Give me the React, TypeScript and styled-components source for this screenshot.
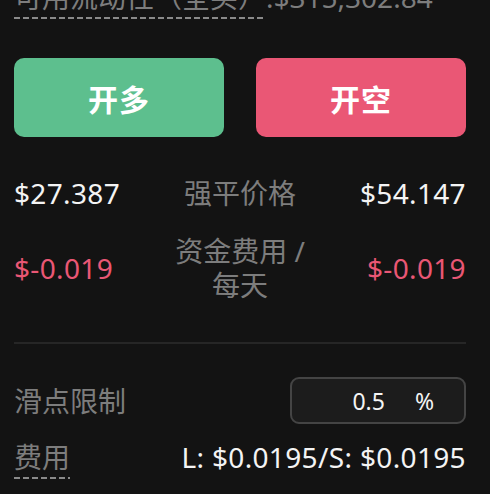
import React from 'react'
import styled, { createGlobalStyle } from 'styled-components'

const GlobalStyle = createGlobalStyle`
    html, body {
        margin: 0;
        padding: 0;
        background: #131313;
        overflow: hidden;
    }
    body {
        font-family: "Noto Sans", "Noto Sans CJK SC", sans-serif;
        color: #f2f2f2;
    }
`

const Panel = styled.div`
    display: flex;
    flex-direction: column;
    padding: 0 24px 0 14px;
    margin-top: -20px;
    height: 514px;
`

const Liquidity = styled.div`
    font-size: 28px;
    line-height: 34px;
    color: #7d7d7d;
    white-space: nowrap;
`

// dashed underline drawn with a gradient so the dash length matches
const Dashed = styled.span`
    padding-bottom: 3px;
    background-image: linear-gradient(to right, #8a8a8a 0 6px, transparent 6px 9px);
    background-size: 9px 2px;
    background-repeat: repeat-x;
    background-position: 0 100%;
`

const ButtonRow = styled.div`
    display: grid;
    grid-template-columns: 1fr 1fr;
    gap: 32px;
    margin-top: 44px;
`

const TradeButton = styled.button<{ $tone: 'long' | 'short' }>`
    height: 79px;
    border: none;
    border-radius: 10px;
    background: ${(p) => (p.$tone === 'long' ? '#5dbf8e' : '#ea5775')};
    color: #ffffff;
    font-family: inherit;
    font-size: 30px;
    font-weight: 700;
    letter-spacing: 1px;
`

const StatRow = styled.div<{ $top: number }>`
    display: grid;
    grid-template-columns: 1fr 160px 1fr;
    align-items: center;
    margin-top: ${(p) => p.$top}px;
`

const StatValue = styled.div<{ $align: 'left' | 'right'; $neg?: boolean }>`
    font-size: 28px;
    line-height: 34px;
    letter-spacing: 0.35px;
    text-align: ${(p) => p.$align};
    color: ${(p) => (p.$neg ? '#ea5775' : '#f4f4f4')};
`

const StatLabel = styled.div`
    font-size: 28px;
    line-height: 34px;
    text-align: center;
    color: #7d7d7d;
`

const Divider = styled.hr`
    border: none;
    border-top: 2px solid #262626;
    margin: 40px 0 0;
`

const SettingRow = styled.div<{ $top: number }>`
    display: flex;
    align-items: center;
    justify-content: space-between;
    margin-top: ${(p) => p.$top}px;
`

const SettingLabel = styled.div`
    font-size: 28px;
    line-height: 34px;
    color: #7d7d7d;
`

const SlipBox = styled.div`
    display: flex;
    align-items: center;
    justify-content: flex-end;
    gap: 30px;
    width: 176px;
    height: 47px;
    box-sizing: border-box;
    padding-right: 30px;
    border: 2px solid #444444;
    border-radius: 9px;
    background: #1c1c1c;
    font-size: 23px;
    color: #f4f4f4;
`

const FeeValue = styled.div`
    font-size: 28px;
    line-height: 34px;
    letter-spacing: 0.35px;
    color: #f4f4f4;
`

export default function App() {
    return (
        <>
            <GlobalStyle />
            <Panel>
                <Liquidity>
                    <Dashed>可用流动性（全买）</Dashed>:$315,302.84
                </Liquidity>
                <ButtonRow>
                    <TradeButton $tone="long">开多</TradeButton>
                    <TradeButton $tone="short">开空</TradeButton>
                </ButtonRow>
                <StatRow $top={39}>
                    <StatValue $align="left">$27.387</StatValue>
                    <StatLabel>强平价格</StatLabel>
                    <StatValue $align="right">$54.147</StatValue>
                </StatRow>
                <StatRow $top={24}>
                    <StatValue $align="left" $neg>
                        $-0.019
                    </StatValue>
                    <StatLabel>资金费用 / 每天</StatLabel>
                    <StatValue $align="right" $neg>
                        $-0.019
                    </StatValue>
                </StatRow>
                <Divider />
                <SettingRow $top={33}>
                    <SettingLabel>滑点限制</SettingLabel>
                    <SlipBox>
                        <span>0.5</span>
                        <span>%</span>
                    </SlipBox>
                </SettingRow>
                <SettingRow $top={16}>
                    <SettingLabel>
                        <Dashed>费用</Dashed>
                    </SettingLabel>
                    <FeeValue>L: $0.0195/S: $0.0195</FeeValue>
                </SettingRow>
            </Panel>
        </>
    )
}
